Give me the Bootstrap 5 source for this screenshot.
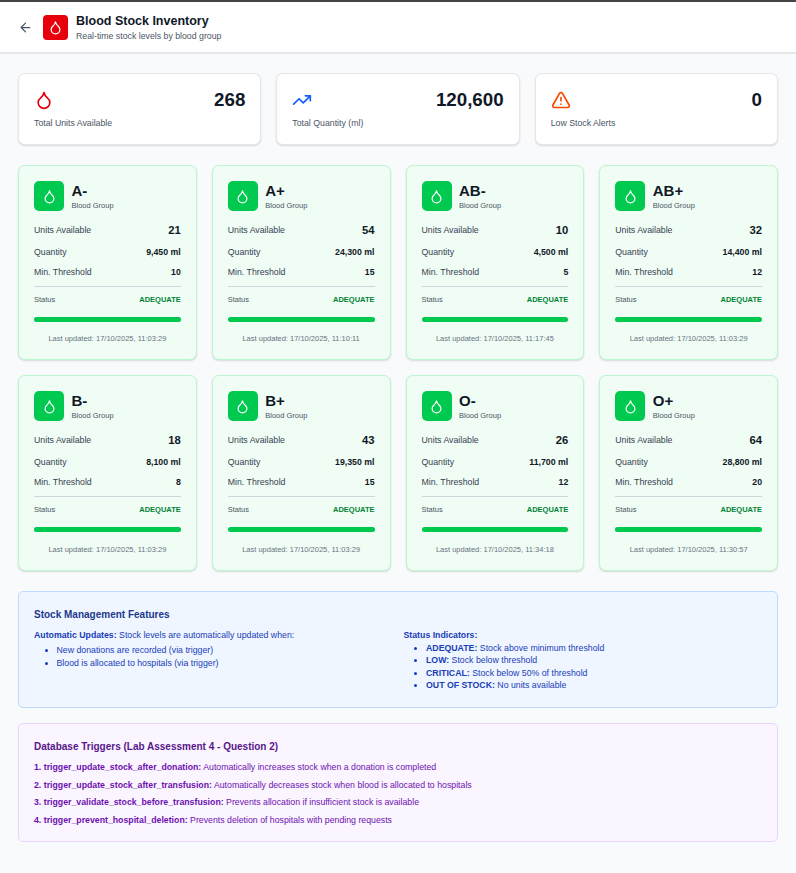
<!DOCTYPE html>
<html lang="en">
<head>
<meta charset="utf-8">
<meta name="viewport" content="width=device-width, initial-scale=1">
<title>Blood Stock Inventory</title>
<link href="https://cdn.jsdelivr.net/npm/bootstrap@5.3.0/dist/css/bootstrap.min.css" rel="stylesheet">
<style>
body{font-family:"Liberation Sans",Arial,sans-serif;font-size:8.75px;line-height:12.5px;color:#101828;background:#f9fafb;min-height:873px}
svg{fill:none;stroke:currentColor;stroke-width:2;stroke-linecap:round;stroke-linejoin:round;flex:none;display:block}
.topbar{height:54px;border-top:2px solid #444;border-bottom:2px solid #e5e7eb;padding:1px 18px 0}
.back-btn{width:15px;color:#4a5565;margin-right:10px}
.logo{width:25px;height:25px;border-radius:4px;background:#e7000b}
.page-title{font-size:12.5px;line-height:16px;padding-bottom:1px}
.sub{color:#4a5565}
.page-body{padding:19px 18px 0}
.tiles{display:grid;gap:15px}
.tiles-3{grid-template-columns:repeat(3,1fr)}
.tiles-4{grid-template-columns:repeat(4,1fr);margin-top:20px}
.stat{height:72px;padding:15px 15px 0;border:1px solid #e5e7eb;border-radius:7px;box-shadow:0 1px 2px rgba(0,0,0,.14)}
.stat svg{margin-top:1px}
.stat-num{font-size:18.75px;line-height:22px}
.stat-label{margin-top:6px}
.c-red{color:#e7000b}
.c-blue{color:#155dfc}
.c-orange{color:#f54900}
.group{height:195px;padding:15px 15px 0;border:1px solid #b9f8cf;border-radius:7px;background:#f0fdf4;box-shadow:0 1px 2px rgba(0,0,0,.14)}
.group.tall{height:196px}
.group-head{gap:7.5px}
.drop-box{width:30px;height:30px;border-radius:5px;background:#00c950}
.group-name{font-size:15px;line-height:17px;padding-bottom:2px}
.tiny{font-size:7.5px;line-height:10px;color:#4a5565}
.line{color:#364153}
.line b{color:#101828;font-size:8.75px}
.line .big{font-size:11.25px;line-height:16px;height:17px}
.units{height:18px;margin-top:10px}
.qty{height:12px;margin-top:7px}
.min{height:13px;margin-top:8px}
.status{border-top:1px solid #d1d5dc;margin-top:7px;padding-top:8px;height:19px}
.ok{color:#008236}
.meter{height:5px;margin-top:12px;border-radius:3px;background:#e5e7eb}
.meter-fill{height:5px;border-radius:3px;background:#00c950}
.updated{margin-top:12px;color:#6a7282}
.tall .updated{margin-top:13px}
.note{border:1px solid;border-radius:5px;padding:15px 15px 0}
.note h2{font-size:10px;line-height:15px;margin:0}
.note-blue{height:117px;margin-top:20px;background:#eff6ff;border-color:#bedbff;color:#193cb8}
.note-blue h2{color:#1c398e}
.note-cols{display:grid;grid-template-columns:1fr 1fr;gap:11px;padding-top:7px}
.note-purple{height:119px;margin-top:15px;background:#faf5ff;border-color:#e9d4ff;color:#6e11b0}
.note-purple h2{color:#59168b}
.note ul{margin:0;padding-left:22.5px}
.auto li{line-height:13px}
.auto ul{margin-top:2.5px}
.trig{margin-top:5px;line-height:17.6px}
</style>
<script src="https://cdn.jsdelivr.net/npm/bootstrap@5.3.0/dist/js/bootstrap.bundle.min.js"></script>
</head>
<body>
<header class="topbar bg-white d-flex align-items-center">
  <a class="back-btn d-block" href="#" aria-label="Back"><svg width="15" height="15" viewBox="0 0 24 24"><path d="m12 19-7-7 7-7M19 12H5"/></svg></a>
  <div class="logo text-white d-flex align-items-center justify-content-center"><svg width="15" height="15" viewBox="0 0 24 24"><path d="M12 22a7 7 0 0 0 7-7c0-2-1-3.900-3-5.500s-3.500-4-4-6.500c-.5 2.500-2 4.900-4 6.500C6 11.100 5 13 5 15a7 7 0 0 0 7 7z"/></svg></div>
  <div class="ms-2">
    <h1 class="page-title fw-bold mb-0">Blood Stock Inventory</h1>
    <div class="sub">Real-time stock levels by blood group</div>
  </div>
</header>
<main class="page-body">
  <section class="tiles tiles-3">
    <div class="stat bg-white">
      <div class="d-flex justify-content-between"><svg class="c-red" width="20" height="20" viewBox="0 0 24 24"><path d="M12 22a7 7 0 0 0 7-7c0-2-1-3.900-3-5.500s-3.500-4-4-6.500c-.5 2.500-2 4.900-4 6.500C6 11.100 5 13 5 15a7 7 0 0 0 7 7z"/></svg><b class="stat-num">268</b></div>
      <div class="sub stat-label">Total Units Available</div>
    </div>
    <div class="stat bg-white">
      <div class="d-flex justify-content-between"><svg class="c-blue" width="20" height="20" viewBox="0 0 24 24"><path d="m22 7-8.500 8.500-5-5L2 17M16 7h6v6"/></svg><b class="stat-num">120,600</b></div>
      <div class="sub stat-label">Total Quantity (ml)</div>
    </div>
    <div class="stat bg-white">
      <div class="d-flex justify-content-between"><svg class="c-orange" width="20" height="20" viewBox="0 0 24 24"><path d="m21.730 18-8-14a2 2 0 0 0-3.480 0l-8 14A2 2 0 0 0 4 21h16a2 2 0 0 0 1.730-3M12 9v4M12 17h.01"/></svg><b class="stat-num">0</b></div>
      <div class="sub stat-label">Low Stock Alerts</div>
    </div>
  </section>
  <section class="tiles tiles-4" id="groups"></section>
  <section class="note note-blue">
    <h2 class="fw-bold">Stock Management Features</h2>
    <div class="note-cols">
      <div class="auto"><b>Automatic Updates:</b> Stock levels are automatically updated when:
        <ul><li>New donations are recorded (via trigger)</li><li>Blood is allocated to hospitals (via trigger)</li></ul>
      </div>
      <div><b>Status Indicators:</b>
        <ul><li><b>ADEQUATE:</b> Stock above minimum threshold</li><li><b>LOW:</b> Stock below threshold</li><li><b>CRITICAL:</b> Stock below 50% of threshold</li><li><b>OUT OF STOCK:</b> No units available</li></ul>
      </div>
    </div>
  </section>
  <section class="note note-purple">
    <h2 class="fw-bold">Database Triggers (Lab Assessment 4 - Question 2)</h2>
    <div class="trig">
      <div><b>1. trigger_update_stock_after_donation:</b> Automatically increases stock when a donation is completed</div>
      <div><b>2. trigger_update_stock_after_transfusion:</b> Automatically decreases stock when blood is allocated to hospitals</div>
      <div><b>3. trigger_validate_stock_before_transfusion:</b> Prevents allocation if insufficient stock is available</div>
      <div><b>4. trigger_prevent_hospital_deletion:</b> Prevents deletion of hospitals with pending requests</div>
    </div>
  </section>
</main>
<script>
const groups = [
  ['A-', 21, '9,450', 10, '11:03:29'], ['A+', 54, '24,300', 15, '11:10:11'],
  ['AB-', 10, '4,500', 5, '11:17:45'], ['AB+', 32, '14,400', 12, '11:03:29'],
  ['B-', 18, '8,100', 8, '11:03:29'], ['B+', 43, '19,350', 15, '11:03:29'],
  ['O-', 26, '11,700', 12, '11:34:18'], ['O+', 64, '28,800', 20, '11:30:57']
];
document.getElementById('groups').innerHTML = groups.map(([name, units, qty, min, time], i) => `
<article class="group ${i > 3 ? 'tall' : ''}">
  <div class="group-head d-flex align-items-center">
    <div class="drop-box text-white d-flex align-items-center justify-content-center"><svg width="15" height="15" viewBox="0 0 24 24"><path d="M12 22a7 7 0 0 0 7-7c0-2-1-3.900-3-5.500s-3.500-4-4-6.500c-.5 2.500-2 4.900-4 6.500C6 11.100 5 13 5 15a7 7 0 0 0 7 7z"/></svg></div>
    <div><div class="group-name fw-bold">${name}</div><div class="tiny">Blood Group</div></div>
  </div>
  <div class="line units d-flex justify-content-between align-items-center"><span>Units Available</span><b class="big">${units}</b></div>
  <div class="line qty d-flex justify-content-between align-items-center"><span>Quantity</span><b>${qty} ml</b></div>
  <div class="line min d-flex justify-content-between align-items-center"><span>Min. Threshold</span><b>${min}</b></div>
  <div class="status tiny d-flex justify-content-between"><span>Status</span><b class="ok">ADEQUATE</b></div>
  <div class="meter"><div class="meter-fill" style="width:${Math.min(100, units / min * 100)}%"></div></div>
  <div class="updated tiny text-center">Last updated: 17/10/2025, ${time}</div>
</article>`).join('');
</script>
</body>
</html>
